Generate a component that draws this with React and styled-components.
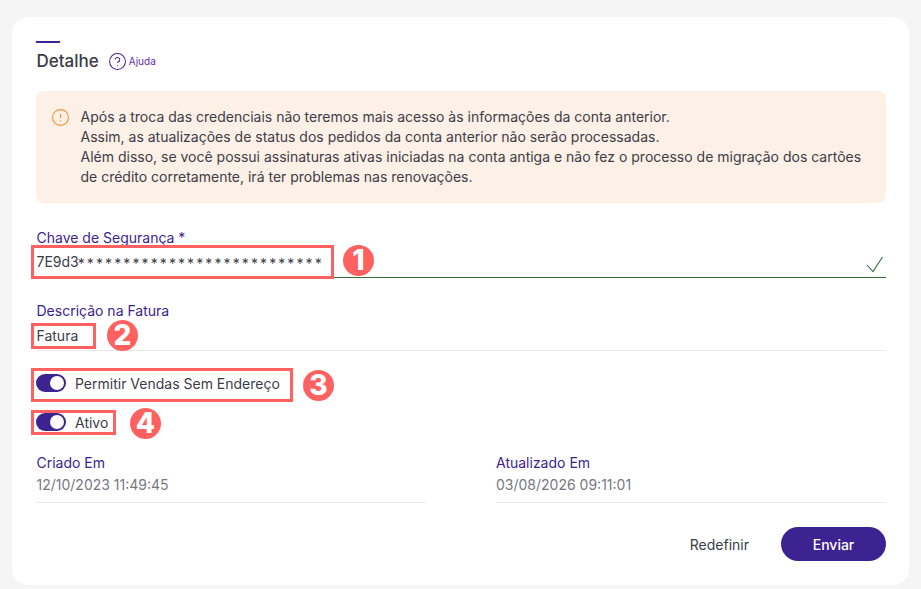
import React from 'react';
import styled, { createGlobalStyle } from 'styled-components';
import { CircleAlert, CircleHelp } from 'lucide-react';

const GlobalStyle = createGlobalStyle`
  html, body {
    margin: 0;
    padding: 0;
    background: #f5f5f5;
    font-family: Inter, "Liberation Sans", sans-serif;
  }
  * { box-sizing: border-box; }
`;

const Page = styled.div`
  position: relative;
  width: 921px;
  height: 589px;
  padding: 17px 12px 4px;
  overflow: hidden;
`;

const Card = styled.div`
  height: 568px;
  background: #fff;
  border-radius: 16px;
  padding: 24px 23px 0 24px;
`;

const HeaderBar = styled.div`
  width: 24px;
  height: 2px;
  background: #3d2391;
`;

const Header = styled.div`
  display: flex;
  align-items: center;
  height: 22px;
  margin-top: 7px;
  padding-left: 0.5px;
`;

const Title = styled.h2`
  margin: 0;
  font-size: 17px;
  line-height: 22px;
  font-weight: 500;
  color: #3c3c46;
`;

const HelpLink = styled.a`
  display: flex;
  align-items: center;
  gap: 2px;
  margin-left: 9px;
  font-size: 10px;
  color: #5c2ea8;
  svg { color: #3d2391; }
`;

const Alert = styled.div`
  display: flex;
  gap: 11px;
  margin-top: 19px;
  height: 112px;
  padding: 16px 14.5px;
  background: #fdf0e6;
  border-radius: 8px;
  font-size: 14px;
  line-height: 20px;
  color: #3c3c46;
  svg { flex: none; color: #f2933c; margin-top: 1px; }
`;

const Field = styled.div`
  margin-top: ${p => p.$top}px;
`;

const Label = styled.div`
  padding-left: 0.5px;
  font-size: 14px;
  line-height: 20px;
  color: #3d2391;
`;

const Value = styled.div`
  display: flex;
  justify-content: space-between;
  align-items: center;
  height: 30px;
  padding-left: 0.5px;
  font-size: 14px;
  color: #3c3c46;
  border-bottom: 1px solid ${p => p.$valid ? '#33703a' : '#e8e8e8'};
`;

const DateValue = styled(Value)`
  padding-bottom: 7px;
  color: #777780;
`;

const Masked = styled.span`
  letter-spacing: 2.1px;
  margin-left: -1px;
  vertical-align: -2px;
`;

const CheckMark = styled.svg`
  flex: none;
  margin: 3px 2px 0 0;
  fill: none;
  stroke: #33703a;
  stroke-width: 1.1;
`;

const ToggleRow = styled.div`
  display: flex;
  align-items: center;
  gap: 9px;
  height: 20px;
  margin-top: ${p => p.$top}px;
  font-size: 14px;
  color: #3c3c46;
`;

const Track = styled.span`
  display: flex;
  justify-content: flex-end;
  align-items: center;
  width: 30px;
  height: 18px;
  padding: 2px;
  border-radius: 9px;
  background: #3d2391;
`;

const Knob = styled.span`
  width: 14px;
  height: 14px;
  border-radius: 50%;
  background: #fff;
`;

const DateGrid = styled.div`
  display: grid;
  grid-template-columns: 390px 390.5px;
  column-gap: 69.5px;
  margin-top: 21px;
`;

const Actions = styled.div`
  display: flex;
  justify-content: flex-end;
  align-items: center;
  gap: 32px;
  margin-top: 24px;
`;

const ResetButton = styled.button`
  border: 0;
  padding: 0;
  background: none;
  font: inherit;
  font-size: 14px;
  color: #3c3c46;
`;

const SendButton = styled.button`
  width: 105px;
  height: 34px;
  border: 0;
  border-radius: 17px;
  background: #3d2391;
  color: #fff;
  font: inherit;
  font-size: 14px;
  font-weight: 500;
`;

const Highlight = styled.div`
  position: absolute;
  left: ${p => p.$x}px;
  top: ${p => p.$y}px;
  width: ${p => p.$w}px;
  height: ${p => p.$h}px;
  border: 3px solid #ff6161;
`;

const Badge = styled.div`
  position: absolute;
  left: ${p => p.$x}px;
  top: ${p => p.$y}px;
  width: 31px;
  height: 31px;
  border-radius: 50%;
  background: #ff6161;
  color: #fff;
  font-size: 28px;
  font-weight: 800;
  line-height: 31px;
  text-align: center;
`;

const annotations = [
  { n: 1, box: [31, 245, 303, 34], badge: [343, 245] },
  { n: 2, box: [31, 323, 65, 26], badge: [107, 320] },
  { n: 3, box: [31, 368, 262, 34], badge: [303, 370] },
  { n: 4, box: [31, 410, 85, 25], badge: [130, 408] },
];

export default function App() {
  return (
    <Page>
      <GlobalStyle />
      <Card>
        <HeaderBar />
        <Header>
          <Title>Detalhe</Title>
          <HelpLink>
            <CircleHelp size={19} strokeWidth={1.3} />
            Ajuda
          </HelpLink>
        </Header>
        <Alert>
          <CircleAlert size={19} strokeWidth={1.4} />
          <div>
            Após a troca das credenciais não teremos mais acesso às informações da conta anterior.<br />
            Assim, as atualizações de status dos pedidos da conta anterior não serão processadas.<br />
            Além disso, se você possui assinaturas ativas iniciadas na conta antiga e não fez o processo de migração dos cartões<br />
            de crédito corretamente, irá ter problemas nas renovações.
          </div>
        </Alert>
        <Field $top={25}>
          <Label>Chave de Segurança *</Label>
          <Value $valid>
            <span>7E9d3<Masked>***************************</Masked></span>
            <CheckMark width="18" height="17" viewBox="0 0 18 17">
              <polyline points="1,9 7,15.5 16.5,1" />
            </CheckMark>
          </Value>
        </Field>
        <Field $top={23}>
          <Label>Descrição na Fatura</Label>
          <Value>Fatura</Value>
        </Field>
        <ToggleRow $top={22}>
          <Track><Knob /></Track>
          Permitir Vendas Sem Endereço
        </ToggleRow>
        <ToggleRow $top={19}>
          <Track><Knob /></Track>
          Ativo
        </ToggleRow>
        <DateGrid>
          <div>
            <Label>Criado Em</Label>
            <DateValue>12/10/2023 11:49:45</DateValue>
          </div>
          <div>
            <Label>Atualizado Em</Label>
            <DateValue>03/08/2026 09:11:01</DateValue>
          </div>
        </DateGrid>
        <Actions>
          <ResetButton>Redefinir</ResetButton>
          <SendButton>Enviar</SendButton>
        </Actions>
      </Card>
      {annotations.map(a => (
        <React.Fragment key={a.n}>
          <Highlight $x={a.box[0]} $y={a.box[1]} $w={a.box[2]} $h={a.box[3]} />
          <Badge $x={a.badge[0]} $y={a.badge[1]}>{a.n}</Badge>
        </React.Fragment>
      ))}
    </Page>
  );
}
